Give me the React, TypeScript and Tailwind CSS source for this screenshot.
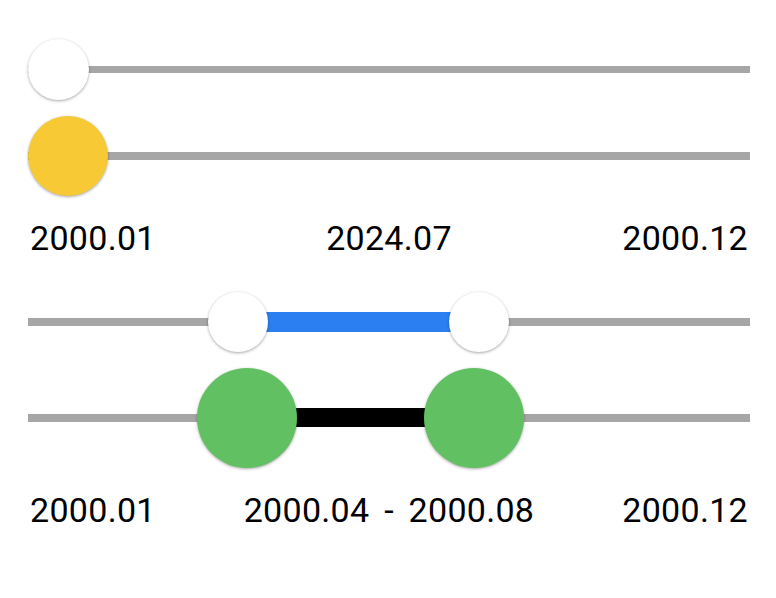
import React from "react";

const thumbShadow = "shadow-[0_1px_3px_rgba(0,0,0,0.35)]";

function Labels({ mid, wide }: { mid: string; wide?: boolean }) {
  return (
    <div className="grid grid-cols-[1fr_auto_1fr] text-[34px] leading-[40px] tracking-[0.3px] text-black px-[2px]">
      <span className="text-left">2000.01</span>
      <span className={`text-center whitespace-nowrap ${wide ? "[word-spacing:6px]" : ""}`}>{mid}</span>
      <span className="text-right">2000.12</span>
    </div>
  );
}

export default function App() {
  return (
    <div
      className="w-[776px] h-[598px] bg-white pl-[28px] pr-[26px] pt-[39px] flex flex-col"
      style={{ fontFamily: "Roboto, 'Liberation Sans', sans-serif" }}
    >
      {/* single sliders */}
      <div className="relative h-[61px] flex items-center">
        <div className="h-[7px] w-full bg-[#a6a6a6]" />
        <div className={`absolute left-0 top-0 w-[61px] h-[61px] rounded-full bg-white ${thumbShadow}`} />
      </div>
      <div className="relative h-[80px] mt-[16px] flex items-center">
        <div className="h-[8px] w-full bg-[#a6a6a6]" />
        <div className={`absolute left-0 top-0 w-[80px] h-[80px] rounded-full bg-[#f6c935] ${thumbShadow}`} />
      </div>
      <div className="mt-[22px]">
        <Labels mid="2024.07" />
      </div>

      {/* range sliders */}
      <div className="relative h-[60px] mt-[34px] flex items-center">
        <div className="h-[8px] w-full bg-[#a6a6a6]" />
        <div className="absolute left-[210px] w-[241px] top-[20px] h-[20px] bg-[#2b7ff0]" />
        <div className={`absolute left-[180px] top-0 w-[60px] h-[60px] rounded-full bg-white ${thumbShadow}`} />
        <div className={`absolute left-[421px] top-0 w-[60px] h-[60px] rounded-full bg-white ${thumbShadow}`} />
      </div>
      <div className="relative h-[100px] mt-[16px] flex items-center">
        <div className="h-[8px] w-full bg-[#a6a6a6]" />
        <div className="absolute left-[219px] w-[227px] top-[40px] h-[19px] bg-black" />
        <div className={`absolute left-[169px] top-0 w-[100px] h-[100px] rounded-full bg-[#60c062] ${thumbShadow}`} />
        <div className={`absolute left-[396px] top-0 w-[100px] h-[100px] rounded-full bg-[#60c062] ${thumbShadow}`} />
      </div>
      <div className="mt-[22px]">
        <Labels mid="2000.04 - 2000.08" wide />
      </div>
    </div>
  );
}
